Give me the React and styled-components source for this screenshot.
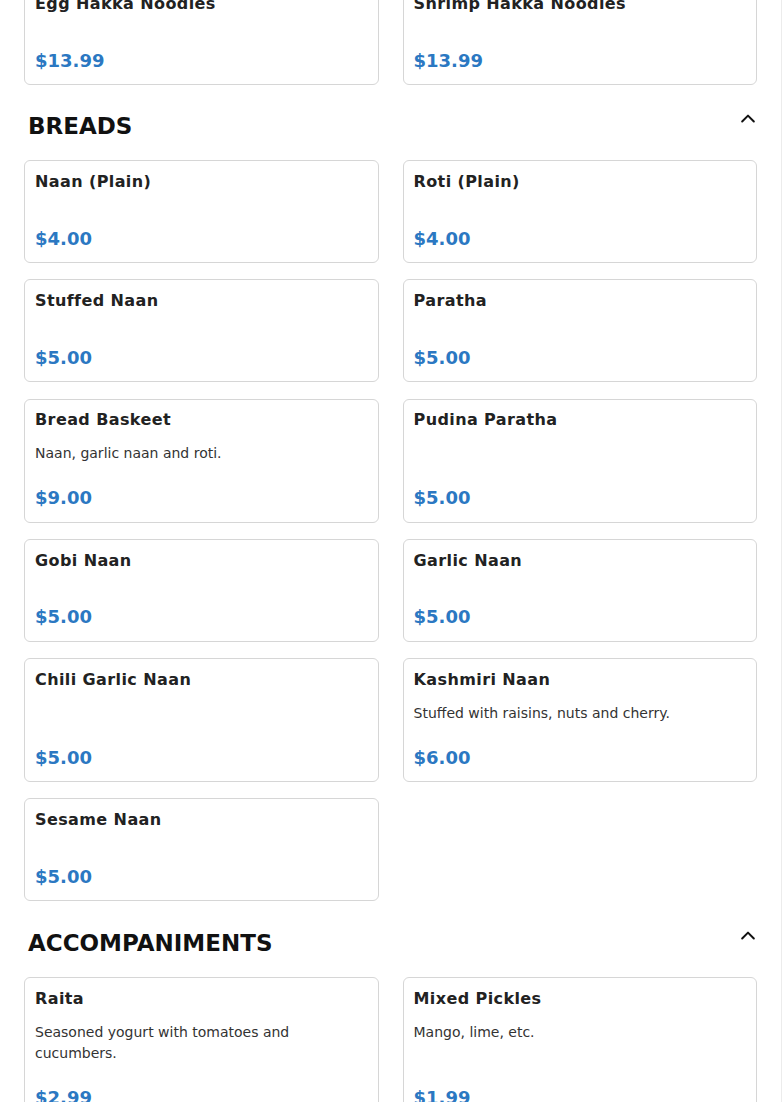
import React from "react";
import styled, { createGlobalStyle } from "styled-components";

const Global = createGlobalStyle`
  html, body { margin: 0; padding: 0; background: #fff; }
  body { font-family: "DejaVu Sans", "Liberation Sans", sans-serif; color: #1f1f1f; }
  * { box-sizing: border-box; }
`;

const Page = styled.div`
  width: 782px;
  padding: 0 24px 40px;
  margin-top: -18px;
  border-right: 1px solid #ececec;
`;

const Section = styled.section`
  & + & { margin-top: 24px; }
  & + & + & { margin-top: 25px; }
`;

const Header = styled.div`
  display: flex;
  align-items: flex-start;
  justify-content: space-between;
  height: 34px;
  margin-bottom: 17px;
  padding-left: 4px;
`;

const HeaderTitle = styled.h2`
  margin: 0;
  font-size: 23px;
  line-height: 34px;
  font-weight: 700;
  letter-spacing: 0;
  color: #111;
`;

const Toggle = styled.button`
  border: 0;
  background: none;
  padding: 0;
  margin: 0 -1px 0 0;
  width: 20px;
  height: 20px;
  display: flex;
  align-items: center;
  justify-content: center;
  color: #111;
`;

const Grid = styled.div`
  display: grid;
  grid-template-columns: 1fr 1fr;
  column-gap: 24px;
  row-gap: 16.25px;
`;

const Card = styled.div`
  display: flex;
  flex-direction: column;
  border: 1px solid #d6d6d6;
  border-radius: 6px;
  padding: 8.75px 10px 10.5px;
  background: #fff;
`;

const Title = styled.h3`
  margin: 0 0 10.75px;
  font-size: 16px;
  line-height: 24px;
  font-weight: 700;
  color: #222;
  letter-spacing: 0.4px;
`;

const Desc = styled.p`
  margin: 0;
  flex: 1;
  font-size: 14px;
  line-height: 21px;
  color: #333;
`;

const Price = styled.div`
  margin-top: 20px;
  font-size: 18px;
  line-height: 27px;
  font-weight: 700;
  color: #2b78c2;
  letter-spacing: 0;
`;

const Chevron = () => (
  <svg width="20" height="20" viewBox="0 0 24 24" fill="none" stroke="currentColor" strokeWidth="2.4" strokeLinecap="round" strokeLinejoin="round">
    <path d="M5 15l7-7 7 7" />
  </svg>
);

const sections = [
  {
    name: null,
    items: [
      { t: "Egg Hakka Noodles", p: "$13.99" },
      { t: "Shrimp Hakka Noodles", p: "$13.99" },
    ],
  },
  {
    name: "BREADS",
    items: [
      { t: "Naan (Plain)", p: "$4.00" },
      { t: "Roti (Plain)", p: "$4.00" },
      { t: "Stuffed Naan", p: "$5.00" },
      { t: "Paratha", p: "$5.00" },
      { t: "Bread Baskeet", d: "Naan, garlic naan and roti.", p: "$9.00" },
      { t: "Pudina Paratha", p: "$5.00" },
      { t: "Gobi Naan", p: "$5.00" },
      { t: "Garlic Naan", p: "$5.00" },
      { t: "Chili Garlic Naan", p: "$5.00" },
      { t: "Kashmiri Naan", d: "Stuffed with raisins, nuts and cherry.", p: "$6.00" },
      { t: "Sesame Naan", p: "$5.00" },
    ],
  },
  {
    name: "ACCOMPANIMENTS",
    items: [
      { t: "Raita", d: "Seasoned yogurt with tomatoes and cucumbers.", p: "$2.99" },
      { t: "Mixed Pickles", d: "Mango, lime, etc.", p: "$1.99" },
      { t: "Papadum", p: "$1.99" },
      { t: "Mango Chutney", p: "$1.99" },
    ],
  },
];

export default function App() {
  return (
    <>
      <Global />
      <Page>
        {sections.map((s, i) => (
          <Section key={i}>
            {s.name && (
              <Header>
                <HeaderTitle>{s.name}</HeaderTitle>
                <Toggle aria-label="collapse"><Chevron /></Toggle>
              </Header>
            )}
            <Grid>
              {s.items.map((it) => (
                <Card key={it.t}>
                  <Title>{it.t}</Title>
                  <Desc>{it.d}</Desc>
                  <Price>{it.p}</Price>
                </Card>
              ))}
            </Grid>
          </Section>
        ))}
      </Page>
    </>
  );
}
